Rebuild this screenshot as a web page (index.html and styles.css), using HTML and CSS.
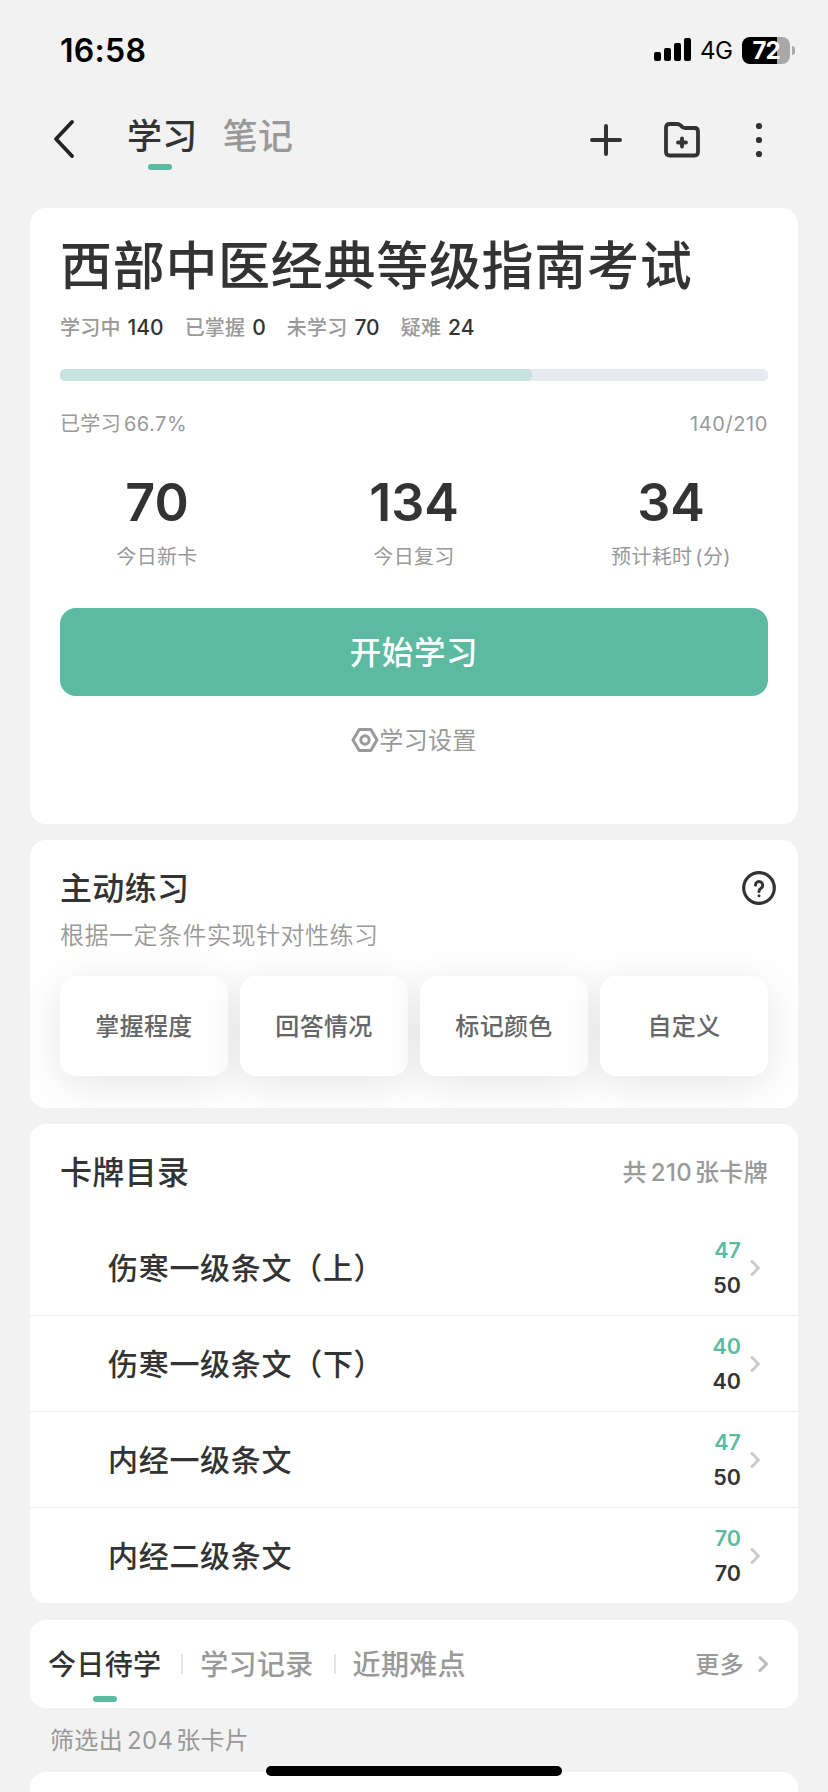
FILE: index.html
```html
<!DOCTYPE html>
<html lang="zh-CN">
<head>
<meta charset="utf-8">
<title>学习</title>
<link rel="stylesheet" href="styles.css">
</head>
<body>
<div class="screen">
  <header class="status">
    <span class="time">16:58</span>
    <div class="status-right">
      <svg class="signal" width="38" height="24" viewBox="0 0 38 24"><rect x="0" y="14" width="7" height="9" rx="2"/><rect x="10" y="10" width="7" height="13" rx="2"/><rect x="20" y="5" width="7" height="18" rx="2"/><rect x="30" y="0" width="7" height="23" rx="2"/></svg>
      <span class="net">4G</span>
      <div class="battery"><span>72</span></div>
      <i class="nub"></i>
    </div>
  </header>

  <nav class="nav">
    <svg class="back" width="24" height="40" viewBox="0 0 24 40"><path d="M20 3 L4 20 L20 37" fill="none" stroke="#222" stroke-width="3.8" stroke-linecap="round" stroke-linejoin="round"/></svg>
    <div class="nav-tabs">
      <span class="nav-tab active">学习</span>
      <span class="nav-tab">笔记</span>
    </div>
    <div class="nav-actions">
      <svg width="32" height="32" viewBox="0 0 32 32"><path d="M16 2v28M2 16h28" stroke="#333" stroke-width="4" stroke-linecap="round"/></svg>
      <svg width="36" height="36" viewBox="0 0 36 36" fill="none" stroke="#333" stroke-width="3.8" stroke-linecap="round" stroke-linejoin="round"><path d="M2 5.500Q2 2 5.500 2H13Q15 2 16.300 3.200L18.300 5Q19.500 6 21.500 6H30.500Q34 6 34 9.500V30Q34 33.500 30.500 33.500H5.500Q2 33.500 2 30Z"/><path d="M18 16.500v8M14 20.500h8"/></svg>
      <svg width="8" height="36" viewBox="0 0 8 36" fill="#333"><circle cx="4" cy="4" r="3.100"/><circle cx="4" cy="18" r="3.100"/><circle cx="4" cy="32" r="3.100"/></svg>
    </div>
  </nav>

  <main class="content">
    <section class="card overview">
      <h1 class="title">西部中医经典等级指南考试</h1>
      <ul class="counts">
        <li>学习中<b>140</b></li>
        <li>已掌握<b>0</b></li>
        <li>未学习<b>70</b></li>
        <li>疑难<b>24</b></li>
      </ul>
      <div class="bar"><div class="bar-fill" style="width:66.7%"></div></div>
      <div class="bar-info"><span>已学习<span class="pct">66.7%</span></span><span class="ratio">140/210</span></div>
      <div class="stats">
        <div class="stat"><strong>70</strong><span>今日新卡</span></div>
        <div class="stat"><strong>134</strong><span>今日复习</span></div>
        <div class="stat"><strong>34</strong><span>预计耗时<span class="paren">(分)</span></span></div>
      </div>
      <button class="start">开始学习</button>
      <div class="settings">
        <svg width="28" height="26" viewBox="0 0 28 26" fill="none" stroke="#999" stroke-width="3" stroke-linejoin="round"><path d="M8.200 2.500h11.600L26 13l-6.200 10.500H8.200L2 13Z"/><circle cx="14" cy="13" r="4.200"/></svg>
        <span>学习设置</span>
      </div>
    </section>

    <section class="card practice">
      <div class="head">
        <h2>主动练习</h2>
        <svg width="34" height="34" viewBox="0 0 34 34" fill="none" stroke="#333" stroke-linecap="round" stroke-linejoin="round"><circle cx="17" cy="17" r="15.300" stroke-width="3.200"/><path d="M13.500 14.200a3.600 3.600 0 1 1 5.500 3q-2 1.200-2 3.300" stroke-width="3"/><circle cx="17" cy="24.700" r="1.500" fill="#333" stroke="none"/></svg>
      </div>
      <p class="sub">根据一定条件实现针对性练习</p>
      <div class="options">
        <div class="option">掌握程度</div>
        <div class="option">回答情况</div>
        <div class="option">标记颜色</div>
        <div class="option">自定义</div>
      </div>
    </section>

    <section class="card catalog">
      <div class="head">
        <h2>卡牌目录</h2>
        <span class="total">共<span class="num">210</span>张卡牌</span>
      </div>
      <div class="row"><span class="name">伤寒一级条文（上）</span><div class="nums"><span class="done">47</span><span>50</span></div><svg class="chev" width="11" height="18" viewBox="0 0 11 18"><path d="M2 2.500L8.500 9L2 15.500"/></svg></div>
      <div class="row"><span class="name">伤寒一级条文（下）</span><div class="nums"><span class="done">40</span><span>40</span></div><svg class="chev" width="11" height="18" viewBox="0 0 11 18"><path d="M2 2.500L8.500 9L2 15.500"/></svg></div>
      <div class="row"><span class="name">内经一级条文</span><div class="nums"><span class="done">47</span><span>50</span></div><svg class="chev" width="11" height="18" viewBox="0 0 11 18"><path d="M2 2.500L8.500 9L2 15.500"/></svg></div>
      <div class="row"><span class="name">内经二级条文</span><div class="nums"><span class="done">70</span><span>70</span></div><svg class="chev" width="11" height="18" viewBox="0 0 11 18"><path d="M2 2.500L8.500 9L2 15.500"/></svg></div>
    </section>

    <section class="card tabs">
      <span class="tab active">今日待学</span>
      <i class="sep"></i>
      <span class="tab">学习记录</span>
      <i class="sep"></i>
      <span class="tab">近期难点</span>
      <span class="more">更多</span>
      <svg class="chev more-chev" width="11" height="18" viewBox="0 0 11 18"><path d="M2 2.500L8.500 9L2 15.500"/></svg>
    </section>

    <p class="filter">筛选出<span class="num">204</span>张卡片</p>
    <section class="card next"></section>
  </main>
  <div class="home"></div>
</div>
</body>
</html>
```
FILE: styles.css
```css
* { box-sizing: border-box; }
body {
  margin: 0;
  background: #f2f2f2;
  color: #333;
  font-family: Inter, "Noto Sans CJK SC", sans-serif;
  line-height: 1.5;
  letter-spacing: .02em;
}
h1, h2, p, ul { margin: 0; padding: 0; font-weight: 500; }
svg { display: block; flex: none; }

.screen { position: relative; width: 828px; height: 1792px; overflow: hidden; }

.status {
  height: 100px;
  padding: 0 33px 0 60px;
  display: flex;
  justify-content: space-between;
  align-items: center;
  color: #000;
}
.time { padding-top: 1px; font-size: 32px; font-weight: 600; letter-spacing: .3px; }
.status-right { display: flex; align-items: center; }
.net { margin-left: 8px; padding-top: 1px; width: 42px; font-size: 24px; letter-spacing: -.6px; }
.battery {
  width: 48px;
  height: 27px;
  border-radius: 8px;
  background: linear-gradient(90deg, #000 35px, #a8a8a8 35px);
  color: #fff;
  font-size: 24px;
  font-weight: 700;
  letter-spacing: -1px;
  line-height: 27px;
  text-align: center;
}
.nub { width: 3px; height: 9px; margin-left: 2px; border-radius: 0 4px 4px 0; background: #a8a8a8; }

.nav { height: 108px; padding: 0 65px 0 52px; display: flex; align-items: flex-start; }
.back { margin-top: 19px; }
.nav-tabs { display: flex; gap: 25px; margin-left: 51px; }
.nav-tab { position: relative; font-size: 35px; line-height: 73px; font-weight: 500; color: #999; }
.nav-tab.active { color: #333; }
.active::after {
  content: "";
  position: absolute;
  left: 50%;
  bottom: 3px;
  width: 24px;
  height: 6px;
  margin-left: -14px;
  border-radius: 3px;
  background: #5cbaa1;
}
.nav-actions { height: 80px; margin-left: auto; display: flex; align-items: center; gap: 42px; }
.nav-actions svg:last-child { margin-left: 13px; }

.content { padding: 0 30px; display: flex; flex-direction: column; }
.card { background: #fff; border-radius: 16px; }

.overview { height: 616px; padding: 23px 30px 0; }
.title { font-size: 52px; line-height: 72px; letter-spacing: .7px; white-space: nowrap; }
.counts { display: flex; list-style: none; margin-top: 9px; font-size: 20px; line-height: 32px; letter-spacing: .2px; color: #999; }
.counts li { height: 32px; margin-right: 21px; white-space: nowrap; }
.counts b { margin-left: 7px; font-size: 21px; font-weight: 500; letter-spacing: 0; color: #333; }
.bar { height: 12px; margin-top: 25px; border-radius: 5px; background: #e7eaf0; overflow: hidden; }
.bar-fill { height: 100%; border-radius: 0 5px 5px 0; background: #c8e1e1; }
.bar-info { display: flex; justify-content: space-between; height: 30px; margin-top: 28px; font-size: 20px; line-height: 30px; color: #999; }
.ratio { letter-spacing: .6px; }
.pct { margin-left: 3px; letter-spacing: .5px; }
.stats { display: flex; justify-content: space-between; margin-top: 24px; }
.stat { width: 194px; display: flex; flex-direction: column; align-items: center; color: #999; }
.stat strong { font-size: 52px; line-height: 80px; font-weight: 600; letter-spacing: 0; color: #333; }
.stat span { font-size: 20px; line-height: 28px; }
.paren { margin-left: 3px; }
.start {
  display: block;
  width: 100%;
  height: 88px;
  margin-top: 37px;
  padding: 1px 0 0;
  border: 0;
  border-radius: 16px;
  background: #5cbaa1;
  color: #fff;
  font: 500 31.5px/48px Inter, "Noto Sans CJK SC", sans-serif;
  letter-spacing: .02em;
}
.settings { display: flex; justify-content: center; align-items: center; height: 88px; font-size: 24px; color: #999; }
.settings span { padding-top: 2px; }

.head { display: flex; justify-content: space-between; align-items: center; }
h2 { height: 48px; font-size: 32px; line-height: 50px; }
.practice { height: 268px; margin-top: 16px; padding: 24px 30px 0; overflow: hidden; }
.practice .head { margin-right: -8px; }
.sub { margin-top: 8px; font-size: 24px; line-height: 32px; font-weight: 350; letter-spacing: .5px; color: #999; }
.options { display: grid; grid-template-columns: repeat(4, 1fr); gap: 12px; margin-top: 24px; }
.option {
  height: 100px;
  border-radius: 16px;
  background: #fff;
  box-shadow: 0 8px 40px rgba(0, 0, 0, .1);
  color: #666;
  font-size: 24px;
  font-weight: 500;
  line-height: 102px;
  text-align: center;
}

.catalog { height: 479px; margin-top: 16px; padding-top: 24px; }
.catalog .head { padding: 0 30px; margin-bottom: 24px; }
.total { padding-top: 2px; font-size: 24px; font-weight: 500; color: #999; }
.num { margin: 0 3px 0 4px; }
.row { display: flex; align-items: center; height: 96px; padding: 0 37px 0 78px; border-bottom: 1px solid #ededed; }
.row:last-child { border-bottom-color: transparent; }
.name { flex: 1; padding-top: 2px; font-size: 30px; font-weight: 500; letter-spacing: .7px; }
.nums { display: flex; flex-direction: column; text-align: right; font-size: 21.5px; line-height: 35px; font-weight: 600; letter-spacing: 0; }
.done { color: #5cbaa1; }
.chev { margin-left: 9px; fill: none; stroke: #ccc; stroke-width: 3; stroke-linecap: round; stroke-linejoin: round; }

.tabs { display: flex; align-items: center; height: 88px; margin-top: 17px; padding: 0 29px 0 18px; }
.tab { position: relative; height: 88px; font-size: 28px; line-height: 90px; font-weight: 500; color: #999; }
.tab.active { color: #333; }
.tab.active::after { bottom: 6px; margin-left: -12px; }
.sep { width: 2px; height: 20px; margin: 0 17px 0 20px; background: #e4e4e4; }
.more { margin-left: auto; padding-top: 2px; font-size: 24px; font-weight: 500; color: #999; }
.more-chev { margin-left: 14px; stroke: #bbb; }
.filter { height: 64px; padding-left: 20px; font-size: 24px; line-height: 66px; font-weight: 400; color: #999; }
.next { height: 60px; }

.home { position: absolute; left: 266px; top: 1766px; width: 296px; height: 10px; border-radius: 5px; background: #000; }
```
